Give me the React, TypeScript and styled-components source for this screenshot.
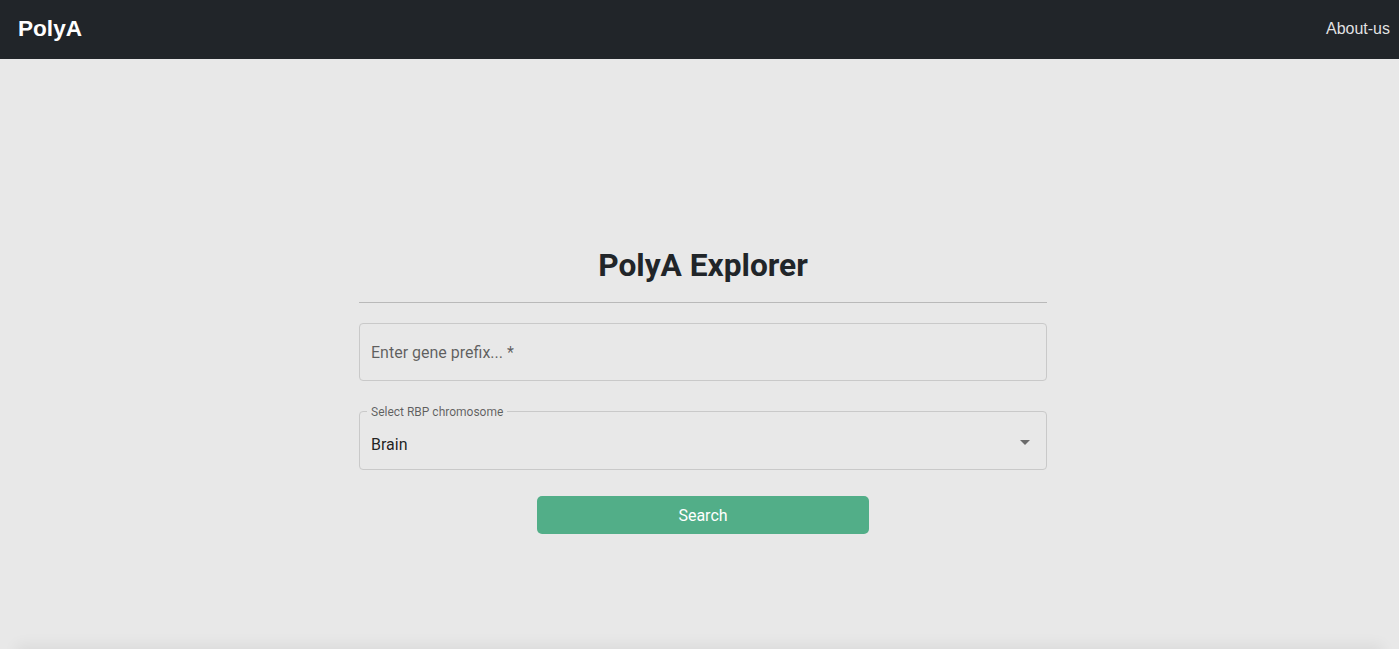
import React from "react";
import styled, { createGlobalStyle } from "styled-components";

const Global = createGlobalStyle`
  * { box-sizing: border-box; }
  html, body { margin: 0; padding: 0; background: #e8e8e8; }
  body { font-family: Roboto, "Liberation Sans", Arial, sans-serif; overflow: hidden; }
`;

const Page = styled.div`
  display: flex;
  flex-direction: column;
  height: 100vh;
  background: #e8e8e8;
  position: relative;
`;

const Navbar = styled.nav`
  height: 59px;
  flex-shrink: 0;
  background: #212529;
  display: flex;
  align-items: center;
  justify-content: space-between;
  padding: 0 9px 2px 18px;
`;

const Brand = styled.a`
  font-family: "Liberation Sans", Arial, sans-serif;
  font-weight: 700;
  font-size: 22.6px;
  color: #ffffff;
  text-decoration: none;
`;

const NavLink = styled.a`
  font-family: "Liberation Sans", Arial, sans-serif;
  font-size: 16px;
  color: rgba(255, 255, 255, 0.88);
  text-decoration: none;
`;

const Main = styled.main`
  flex: 1;
  display: flex;
  justify-content: center;
  padding: 188px 0 0 7px;
`;

const Panel = styled.div`
  width: 688px;
  display: flex;
  flex-direction: column;
  align-items: center;
`;

const Title = styled.h1`
  margin: 0;
  font-family: Roboto, sans-serif;
  font-weight: 700;
  font-size: 31.7px;
  line-height: 38px;
  color: #212529;
`;

const Divider = styled.hr`
  width: 100%;
  margin: 17px 0 20px;
  border: 0;
  border-top: 1px solid #b9b9b9;
`;

const InputBox = styled.div`
  width: 100%;
  height: 58px;
  border: 1px solid #c9c9c9;
  border-radius: 4px;
  display: flex;
  align-items: center;
  padding: 0 11px;
  font-size: 16px;
  color: rgba(0, 0, 0, 0.6);
`;

const SelectField = styled.fieldset`
  width: 100%;
  margin: 23px 0 0;
  border: 1px solid #c9c9c9;
  border-radius: 4px;
  padding: 0 9px 0 11px;
  min-width: 0;
`;

const Legend = styled.legend`
  font-size: 12px;
  color: rgba(0, 0, 0, 0.6);
  padding: 1px 4px 0;
  margin-left: -4px;
  line-height: 14px;
`;

const SelectRow = styled.div`
  height: 50px;
  display: flex;
  align-items: center;
  justify-content: space-between;
`;

const SelectValue = styled.span`
  font-size: 16px;
  color: rgba(0, 0, 0, 0.87);
`;

const Arrow = styled.svg`
  width: 24px;
  height: 24px;
  fill: rgba(0, 0, 0, 0.54);
  margin-top: -4px;
`;

const Button = styled.button`
  margin-top: 26px;
  width: 332px;
  height: 38px;
  border: 0;
  border-radius: 5px;
  background: #52ae88;
  color: #ffffff;
  font-family: Roboto, sans-serif;
  font-weight: 400;
  font-size: 16px;
  cursor: pointer;
`;

const BottomShade = styled.div`
  position: absolute;
  left: 16px;
  right: 16px;
  bottom: -60px;
  height: 60px;
  background: #e8e8e8;
  box-shadow: 0 -4px 14px rgba(0, 0, 0, 0.06);
`;

export default function App() {
  return (
    <>
      <Global />
      <Page>
        <Navbar>
          <Brand href="#">PolyA</Brand>
          <NavLink href="#">About-us</NavLink>
        </Navbar>
        <Main>
          <Panel>
            <Title>PolyA Explorer</Title>
            <Divider />
            <InputBox>Enter gene prefix... *</InputBox>
            <SelectField>
              <Legend>Select RBP chromosome</Legend>
              <SelectRow>
                <SelectValue>Brain</SelectValue>
                <Arrow viewBox="0 0 24 24">
                  <path d="M7 10l5 5 5-5z" />
                </Arrow>
              </SelectRow>
            </SelectField>
            <Button>Search</Button>
          </Panel>
        </Main>
        <BottomShade />
      </Page>
    </>
  );
}
